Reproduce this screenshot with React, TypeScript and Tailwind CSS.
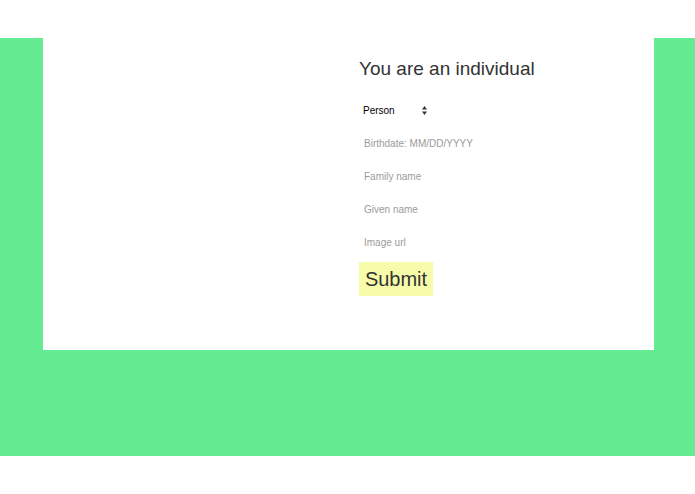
import React, { useState } from 'react';

const App: React.FC = () => {
  const [kind, setKind] = useState('Person');

  return (
    <div className="w-full min-h-screen bg-white flex flex-col font-['Liberation_Sans',Arial,sans-serif]">
      <div className="h-[38px]"></div>

      <div className="h-[418px] bg-[#65eb91] pl-[43px] pr-[41px]">
        <div className="h-[312px] bg-white flex">
          <div className="w-[316px] shrink-0"></div>

          <form className="flex flex-col pt-[18px]" onSubmit={(e) => e.preventDefault()}>
            <h1 className="text-[19px] leading-[26px] text-[#333] mb-[12px]">You are an individual</h1>

            <div className="relative h-[33px] flex items-center w-[72px]">
              <select
                value={kind}
                onChange={(e) => setKind(e.target.value)}
                className="appearance-none bg-transparent w-full pl-[4px] text-[10px] text-black focus:outline-none"
              >
                <option value="Person">Person</option>
                <option value="Organization">Organization</option>
              </select>
              <svg
                className="absolute left-[63px] top-[12px] pointer-events-none"
                width="5"
                height="9"
                viewBox="0 0 5 9"
              >
                <path d="M2.5 0 L5 3.5 L0 3.5 Z" fill="#333" />
                <path d="M2.5 9 L5 5.5 L0 5.5 Z" fill="#333" />
              </svg>
            </div>

            {['Birthdate: MM/DD/YYYY', 'Family name', 'Given name', 'Image url'].map((p) => (
              <div key={p} className="h-[33px] flex items-center">
                <input
                  type="text"
                  placeholder={p}
                  className="w-[200px] pl-[5px] text-[10px] text-black placeholder:text-[#9b9b9b] bg-transparent focus:outline-none"
                />
              </div>
            ))}

            <div className="pt-[3px]">
              <button
                type="submit"
                className="h-[34px] w-[74px] bg-[#f6fca9] text-[20px] leading-none text-[#333]"
              >
                Submit
              </button>
            </div>
          </form>
        </div>
      </div>

      <div className="h-[38px]"></div>
    </div>
  );
};

export default App;
